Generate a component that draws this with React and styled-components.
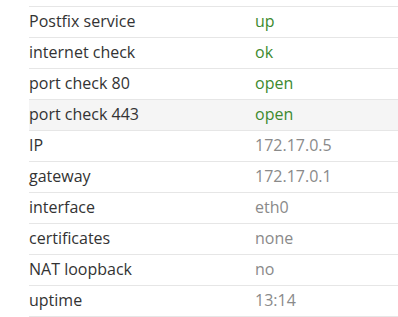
import styled, { createGlobalStyle } from 'styled-components'

const GlobalStyle = createGlobalStyle`
  body {
    margin: 0;
    background: #ffffff;
    font-family: 'Open Sans', 'Liberation Sans', sans-serif;
  }
`

const Wrapper = styled.div`
  padding: 6px 0 0 29px;
`

const StatusTable = styled.div`
  display: flex;
  flex-direction: column;
  border-top: 1px solid #e6e6e6;
`

const Row = styled.div`
  display: grid;
  grid-template-columns: 226px 1fr;
  align-items: start;
  height: 30px;
  border-bottom: 1px solid #e6e6e6;
  background-color: ${(props) => (props.$striped ? '#f5f5f5' : '#ffffff')};
`

const Label = styled.div`
  font-size: 16px;
  color: #333333;
  line-height: 29px;
`

const Value = styled.div`
  font-size: 16px;
  line-height: 29px;
  color: ${(props) => (props.$ok ? '#3d8a2f' : '#8a8a8a')};
`

const rows = [
  { label: 'Postfix service', value: 'up', ok: true },
  { label: 'internet check', value: 'ok', ok: true },
  { label: 'port check 80', value: 'open', ok: true },
  { label: 'port check 443', value: 'open', ok: true, striped: true },
  { label: 'IP', value: '172.17.0.5' },
  { label: 'gateway', value: '172.17.0.1' },
  { label: 'interface', value: 'eth0' },
  { label: 'certificates', value: 'none' },
  { label: 'NAT loopback', value: 'no' },
  { label: 'uptime', value: '13:14' },
]

const App = () => {
  return (
    <>
      <GlobalStyle />
      <Wrapper>
        <StatusTable>
          {rows.map((row) => (
            <Row key={row.label} $striped={row.striped}>
              <Label>{row.label}</Label>
              <Value $ok={row.ok}>{row.value}</Value>
            </Row>
          ))}
        </StatusTable>
      </Wrapper>
    </>
  )
}

export default App
